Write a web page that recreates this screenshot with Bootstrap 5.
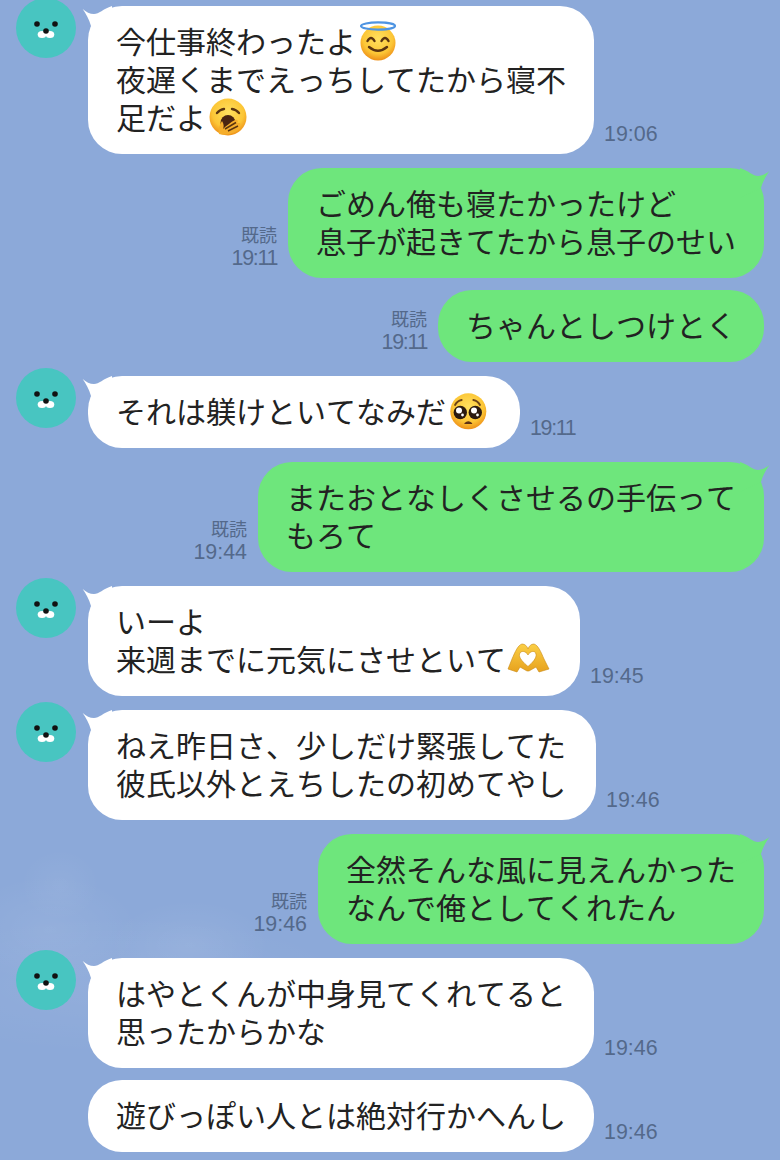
<!DOCTYPE html>
<html lang="ja">
<head>
<meta charset="utf-8">
<title>トーク</title>
<link href="https://cdn.jsdelivr.net/npm/bootstrap@5.3.0/dist/css/bootstrap.min.css" rel="stylesheet">
<style>
html,body{height:1160px;overflow:hidden}
body{
  font-family:"Noto Sans CJK JP","Liberation Sans",sans-serif;
  background-color:#8ca9d9;
  background-image:
    radial-gradient(ellipse 40px 36px at 60px 885px,rgba(255,255,255,.05),rgba(255,255,255,0)),
    radial-gradient(ellipse 90px 55px at 50px 930px,rgba(255,255,255,.07),rgba(255,255,255,0)),
    radial-gradient(ellipse 80px 45px at 190px 945px,rgba(255,255,255,.07),rgba(255,255,255,0)),
    radial-gradient(ellipse 240px 70px at 120px 985px,rgba(255,255,255,.06),rgba(255,255,255,0));
}
.chat{padding:6px 16px 8px}
.msg{margin-top:14px}
.msg:first-child{margin-top:0}
.msg.cont{margin-top:12px}
.face{width:60px;height:60px;margin-top:-8px;margin-right:12px;flex:none}
.nosp{width:60px;margin-right:12px;flex:none}
.bub{position:relative;padding:15px 28px 19px;border-radius:34px;font-size:30px;line-height:38px;color:#222;white-space:nowrap;background:#fff;font-kerning:none;font-feature-settings:"kern" 0,"palt" 0}
.bub.me{background:#6ee67c}
.bub.plus{padding-right:30px}
.tail{position:absolute;top:0;left:-6px;width:30px;height:30px;color:#fff}
.me .tail{left:auto;right:-6px;transform:scaleX(-1);color:#6ee67c}
.emo{display:inline-block;vertical-align:top;width:38px;height:38px;margin:0 5px 0 3px;overflow:visible}
.tm{font-family:"Liberation Sans",sans-serif;font-size:21.4px;line-height:24px;color:#54698b;margin:0 0 8px 10px;white-space:nowrap}
.tm.nar{letter-spacing:-1.3px}
.rd{text-align:right;margin:0 11px 8px 0;color:#54698b;white-space:nowrap}
.rd .kd{font-size:18px;line-height:22px;display:block;margin-bottom:1px}
.rd .tm{margin:0;display:block}
</style>
</head>
<body>
<svg width="0" height="0" class="position-absolute">
  <defs>
    <symbol id="t" viewBox="-6 0 30 30"><path fill="currentColor" d="M-5.300 3C-2 6 2 8 6 8C11 8 15 3 24 0L24 30L3 20C1 13-2 8-5.300 3Z"/></symbol>
    <symbol id="b" viewBox="0 0 60 60">
      <circle cx="30" cy="30" r="30" fill="#48c5c1"/>
      <circle cx="21" cy="26" r="2.800" fill="#111"/><circle cx="39" cy="26" r="2.800" fill="#111"/>
      <ellipse cx="26" cy="36.500" rx="4.300" ry="3.600" fill="#fff"/><ellipse cx="34" cy="36.500" rx="4.300" ry="3.600" fill="#fff"/>
      <circle cx="30" cy="33" r="2.800" fill="#111"/>
    </symbol>
    <radialGradient id="g" cx=".5" cy=".38" r=".62">
      <stop offset="0" stop-color="#ffe05f"/><stop offset=".68" stop-color="#fcc636"/><stop offset="1" stop-color="#ee9018"/>
    </radialGradient>
    <linearGradient id="h" x1="0" y1="0" x2="0" y2="1">
      <stop offset="0" stop-color="#fbcf45"/><stop offset="1" stop-color="#e7a21e"/>
    </linearGradient>
  </defs>
</svg>
<main class="chat">

<div class="msg d-flex align-items-start">
  <svg class="face"><use href="#b"/></svg>
  <div class="d-flex align-items-end">
    <div class="bub"><svg class="tail"><use href="#t"/></svg>今仕事終わったよ<svg class="emo" viewBox="0 0 38 38"><circle cx="19" cy="22" r="17.500" fill="url(#g)"/><ellipse cx="19" cy="5" rx="17" ry="3.600" fill="none" stroke="#4e94e2" stroke-width="2.200"/><path d="M8.500 20q3.500-6 7 0M22.500 20q3.500-6 7 0" fill="none" stroke="#5a3410" stroke-width="2.400" stroke-linecap="round"/><path d="M10 26q9 7.500 18 0" fill="none" stroke="#5a3410" stroke-width="2.400" stroke-linecap="round"/></svg><br>夜遅くまでえっちしてたから寝不<br>足だよ<svg class="emo" viewBox="0 0 38 38"><circle cx="19" cy="20" r="18.500" fill="url(#g)"/><path d="M8 16q3-3.500 7-4M23 12q4 .5 7 4" fill="none" stroke="#5a3410" stroke-width="2.400" stroke-linecap="round"/><ellipse cx="19" cy="26" rx="7.500" ry="8" fill="#4a2411"/><path d="M10 37C9 32 11 27 13 24C15 27 15 30 14 32C17 29 22 25 26 23C28 22 30 24 28 26L31 26C32 28 30 30 29 30L30 32C27 36 16 39 10 37Z" fill="#f5ae2c"/><path d="M16 32L27 25.500M19 34L29 29" stroke="#5a3410" stroke-width="1.500" fill="none"/></svg></div>
    <span class="tm">19:06</span>
  </div>
</div>

<div class="msg d-flex justify-content-end align-items-end">
  <div class="rd"><span class="kd">既読</span><span class="tm nar">19:11</span></div>
  <div class="bub me"><svg class="tail"><use href="#t"/></svg>ごめん俺も寝たかったけど<br>息子が起きてたから息子のせい</div>
</div>

<div class="msg cont d-flex justify-content-end align-items-end">
  <div class="rd"><span class="kd">既読</span><span class="tm nar">19:11</span></div>
  <div class="bub me">ちゃんとしつけとく</div>
</div>

<div class="msg d-flex align-items-start">
  <svg class="face"><use href="#b"/></svg>
  <div class="d-flex align-items-end">
    <div class="bub"><svg class="tail"><use href="#t"/></svg>それは躾けといてなみだ<svg class="emo" viewBox="0 0 38 38"><circle cx="19.300" cy="20.300" r="18" fill="url(#g)"/><path d="M6 14q2-4 6.700-5M31 14q-2-4-6.700-5" fill="none" stroke="#6b4217" stroke-width="1.800" stroke-linecap="round"/><circle cx="11.300" cy="21.500" r="6.700" fill="#2b1a10"/><circle cx="26.300" cy="21.500" r="6.700" fill="#2b1a10"/><circle cx="10" cy="19.500" r="3" fill="#fff"/><circle cx="25" cy="19.500" r="3" fill="#fff"/><circle cx="13.500" cy="24" r="1.400" fill="#fff"/><circle cx="28.500" cy="24" r="1.400" fill="#fff"/><path d="M16 32.500q3.300-3 6.600 0z" fill="#5d3014" stroke="#5d3014" stroke-width="1.200" stroke-linejoin="round"/></svg></div>
    <span class="tm nar">19:11</span>
  </div>
</div>

<div class="msg d-flex justify-content-end align-items-end">
  <div class="rd"><span class="kd">既読</span><span class="tm">19:44</span></div>
  <div class="bub me"><svg class="tail"><use href="#t"/></svg>またおとなしくさせるの手伝って<br>もろて</div>
</div>

<div class="msg d-flex align-items-start">
  <svg class="face"><use href="#b"/></svg>
  <div class="d-flex align-items-end">
    <div class="bub"><svg class="tail"><use href="#t"/></svg>いーよ<br>来週までに元気にさせといて<svg class="emo" viewBox="0 0 38 38"><path fill="url(#h)" stroke="#c98a14" stroke-width=".6" fill-rule="evenodd" d="M13 5C16 5 18 7 19 10C20 7 22 5 25 5C29 6 32 13 35 20L40 30L30 33L27 28L20 32H18L11 28L8 33L-1 30L3 20C6 13 9 6 13 5ZM19 16C17 12 12 11 10.500 15C9.500 19 15 24 19 27.500C23 24 28 19 27 15C26 11 21 12 19 16Z"/></svg></div>
    <span class="tm">19:45</span>
  </div>
</div>

<div class="msg d-flex align-items-start">
  <svg class="face"><use href="#b"/></svg>
  <div class="d-flex align-items-end">
    <div class="bub plus"><svg class="tail"><use href="#t"/></svg>ねえ昨日さ、少しだけ緊張してた<br>彼氏以外とえちしたの初めてやし</div>
    <span class="tm">19:46</span>
  </div>
</div>

<div class="msg d-flex justify-content-end align-items-end">
  <div class="rd"><span class="kd">既読</span><span class="tm">19:46</span></div>
  <div class="bub me"><svg class="tail"><use href="#t"/></svg>全然そんな風に見えんかった<br>なんで俺としてくれたん</div>
</div>

<div class="msg d-flex align-items-start">
  <svg class="face"><use href="#b"/></svg>
  <div class="d-flex align-items-end">
    <div class="bub"><svg class="tail"><use href="#t"/></svg>はやとくんが中身見てくれてると<br>思ったからかな</div>
    <span class="tm">19:46</span>
  </div>
</div>

<div class="msg cont d-flex align-items-start">
  <div class="nosp"></div>
  <div class="d-flex align-items-end">
    <div class="bub">遊びっぽい人とは絶対行かへんし</div>
    <span class="tm">19:46</span>
  </div>
</div>

</main>
<script src="https://cdn.jsdelivr.net/npm/bootstrap@5.3.0/dist/js/bootstrap.bundle.min.js"></script>
</body>
</html>
